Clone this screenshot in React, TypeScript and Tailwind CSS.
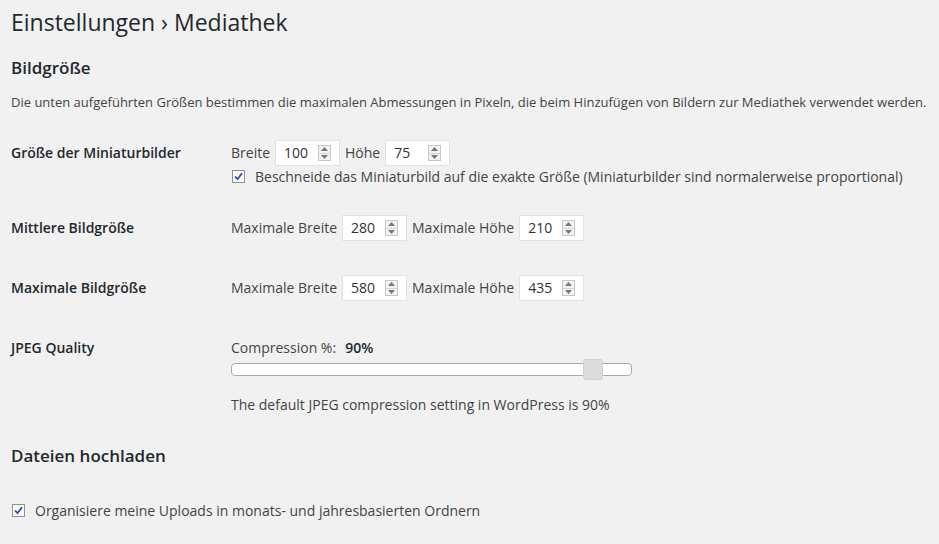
import React from "react";

function Spinner() {
  return (
    <span className="absolute right-[8px] top-1/2 -translate-y-1/2 flex h-[16px] w-[13px] flex-col border border-[#c8c8c8] bg-[#f3f3f3]">
      <span className="flex flex-1 items-center justify-center border-b border-[#d4d4d4]">
        <svg width="7" height="4" viewBox="0 0 7 4">
          <path d="M0 4 L3.5 0 L7 4 Z" fill="#777" />
        </svg>
      </span>
      <span className="flex flex-1 items-center justify-center">
        <svg width="7" height="4" viewBox="0 0 7 4">
          <path d="M0 0 L3.5 4 L7 0 Z" fill="#777" />
        </svg>
      </span>
    </span>
  );
}

function NumberBox({ value }: { value: string }) {
  return (
    <span className="relative inline-flex h-[26px] w-[65px] items-center border border-[#e2e2e2] bg-white pl-[8px] text-[14px] text-[#333]">
      {value}
      <Spinner />
    </span>
  );
}

function Check() {
  return (
    <span className="inline-flex h-[13px] w-[13px] items-center justify-center border border-[#8f8f9d] bg-[#fafafa]">
      <svg width="9" height="9" viewBox="0 0 9 9">
        <path d="M1 4.5 L3.5 7.2 L8 1.2" fill="none" stroke="#2b4fa8" strokeWidth="1.8" />
      </svg>
    </span>
  );
}

export default function App() {
  const label = "w-[220px] shrink-0 text-[14px] font-semibold text-[#23282d] leading-[26px]";
  return (
    <div
      className="min-h-screen bg-[#f1f1f1] pl-[11px] pt-[8px] text-[#444]"
      style={{ fontFamily: '"Open Sans", "Noto Sans", sans-serif' }}
    >
      <h1 className="text-[23px] leading-[29px] font-normal text-[#23282d]">Einstellungen › Mediathek</h1>

      <h2 className="mt-[19px] text-[17px] leading-[24px] font-semibold text-[#23282d]">Bildgröße</h2>
      <p className="mt-[12px] text-[13px] leading-[20px]">
        Die unten aufgeführten Größen bestimmen die maximalen Abmessungen in Pixeln, die beim Hinzufügen von Bildern zur Mediathek verwendet werden.
      </p>

      {/* Miniaturbilder */}
      <div className="mt-[28px] flex">
        <div className={label}>Größe der Miniaturbilder</div>
        <div className="flex flex-col text-[14px]">
          <div className="flex items-center gap-[5px] leading-[26px]">
            <span>Breite</span>
            <NumberBox value="100" />
            <span>Höhe</span>
            <NumberBox value="75" />
          </div>
          <div className="flex h-[20px] items-center gap-[10px] pl-[1px]">
            <Check />
            <span>Beschneide das Miniaturbild auf die exakte Größe (Miniaturbilder sind normalerweise proportional)</span>
          </div>
        </div>
      </div>

      {/* Mittlere */}
      <div className="mt-[29px] flex">
        <div className={label}>Mittlere Bildgröße</div>
        <div className="flex items-center gap-[5px] text-[14px] leading-[26px]">
          <span>Maximale Breite</span>
          <NumberBox value="280" />
          <span>Maximale Höhe</span>
          <NumberBox value="210" />
        </div>
      </div>

      {/* Maximale */}
      <div className="mt-[34px] flex">
        <div className={label}>Maximale Bildgröße</div>
        <div className="flex items-center gap-[5px] text-[14px] leading-[26px]">
          <span>Maximale Breite</span>
          <NumberBox value="580" />
          <span>Maximale Höhe</span>
          <NumberBox value="435" />
        </div>
      </div>

      {/* JPEG */}
      <div className="mt-[37px] flex">
        <div className="w-[220px] shrink-0 text-[14px] font-semibold leading-[20px] text-[#23282d]">JPEG Quality</div>
        <div className="flex flex-col text-[14px]">
          <div className="leading-[20px]">
            Compression %:<span className="ml-[9px] font-semibold text-[#23282d]">90%</span>
          </div>
          <div className="relative mt-[5px] h-[13px] w-[401px] rounded-[4px] border border-[#aaa] bg-white">
            <span className="absolute left-[351px] top-[-5px] h-[21px] w-[20px] rounded-[3px] border border-[#d0d0d0] bg-[#dcdcdc]" />
          </div>
          <div className="mt-[19px] leading-[20px]">The default JPEG compression setting in WordPress is 90%</div>
        </div>
      </div>

      <h2 className="mt-[29px] text-[17px] leading-[24px] font-semibold text-[#23282d]">Dateien hochladen</h2>

      <div className="mt-[32px] flex h-[20px] items-center gap-[10px] pl-[1px] text-[14px]">
        <Check />
        <span>Organisiere meine Uploads in monats- und jahresbasierten Ordnern</span>
      </div>
    </div>
  );
}
